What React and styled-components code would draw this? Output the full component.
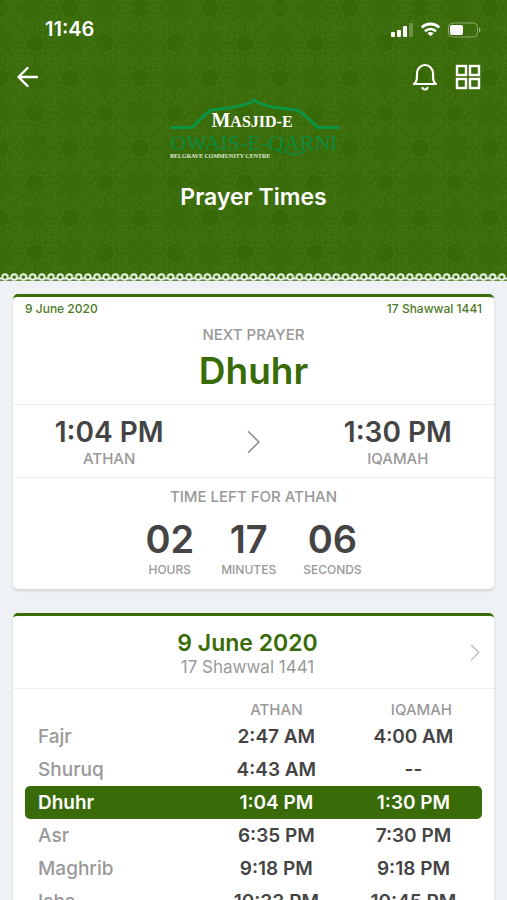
import { Fragment } from "react";
import styled, { createGlobalStyle } from "styled-components";

const prayers = [
  { name: "Fajr", athan: "2:47 AM", iqamah: "4:00 AM" },
  { name: "Shuruq", athan: "4:43 AM", iqamah: "--" },
  { name: "Dhuhr", athan: "1:04 PM", iqamah: "1:30 PM", active: true },
  { name: "Asr", athan: "6:35 PM", iqamah: "7:30 PM" },
  { name: "Maghrib", athan: "9:18 PM", iqamah: "9:18 PM" },
  { name: "Isha", athan: "10:33 PM", iqamah: "10:45 PM" },
];

const countdown = [
  { value: "02", label: "Hours" },
  { value: "17", label: "Minutes" },
  { value: "06", label: "Seconds" },
];

// centres of the two rosettes repeated by the header pattern
const rosettes = [
  [0, 8], [70, 8], [0, 78], [70, 78], [35, 43],
];
const spokes = [0, 45, 90, 135, 180, 225, 270, 315];

function HeaderPattern() {
  return (
    <PatternSvg aria-hidden="true">
      <defs>
        <pattern id="rosettes" width="70" height="70" patternUnits="userSpaceOnUse">
          <g fill="none" stroke="#5b8a35" strokeOpacity="0.22" strokeWidth="1">
            {rosettes.map(([x, y]) => (
              <g key={`${x}-${y}`} transform={`translate(${x} ${y})`}>
                <circle r="9.500" fill="#326304" fillOpacity="0.3" />
                {spokes.map((angle) => (
                  <Fragment key={angle}>
                    <circle r="5" cx="19" transform={`rotate(${angle + 22})`} />
                    <path d="M9.500 0 L20 -8 L29 0 L20 8 Z" transform={`rotate(${angle})`} />
                  </Fragment>
                ))}
              </g>
            ))}
          </g>
        </pattern>
      </defs>
      <rect width="100%" height="100%" fill="url(#rosettes)" />
    </PatternSvg>
  );
}

function Lace() {
  return (
    <LaceSvg aria-hidden="true">
      <defs>
        <pattern id="lace" width="9.2" height="9" patternUnits="userSpaceOnUse">
          <circle cx="5" cy="4" r="2.8" fill="none" stroke="#eef5ea" strokeWidth="1.9" />
          <path d="M0 5.6 H2 M8 5.6 H9.2" stroke="#eef5ea" strokeWidth="2" />
          <path d="M0 8.5 H9.2" stroke="#eef2f5" strokeWidth="1.4" />
        </pattern>
      </defs>
      <rect width="100%" height="9" fill="url(#lace)" />
    </LaceSvg>
  );
}

function Logo() {
  return (
    <LogoSvg viewBox="0 0 172 64" role="img" aria-label="Masjid-e Owais-e-Qarni">
      <path
        d="M2 29.500 H24 C31 23 36 17 43 12 C56 10 72 10 84 4 L86.500 2 L89 4 C100 10 114 10 129 12 C137 17 144 24 150 29.500 H171"
        fill="none"
        stroke="#0b9444"
        strokeWidth="3"
      />
      <text x="84" y="29" textAnchor="middle" fontSize="20" fontWeight="700" fill="#ffffff">
        M<tspan fontSize="16">ASJID-E</tspan>
      </text>
      <text x="86" y="52" textAnchor="middle" fontSize="22" fill="#0b8a3e">
        OWAIS-E-QARNI
      </text>
      <path d="M116 52 C121 57 130 58 137 53" fill="none" stroke="#0b8a3e" strokeWidth="1.400" />
      <text x="2" y="60" fontSize="6" fontWeight="700" fill="#dfe9d6">
        BELGRAVE COMMUNITY CENTRE
      </text>
    </LogoSvg>
  );
}

function StatusIcons() {
  return (
    <svg width="90" height="18" viewBox="0 0 90 18" aria-hidden="true">
      <g fill="#ffffff">
        <rect x="0" y="12" width="4" height="5" rx="1" />
        <rect x="6" y="10" width="4" height="7" rx="1" />
        <rect x="12" y="6" width="4" height="11" rx="1" />
        <rect x="18" y="3" width="4" height="14" rx="1" opacity="0.25" />
        <path d="M39.500 16.300 L36.400 13.300 A4.200 4.200 0 0 1 42.600 13.300 Z" />
        <rect x="59" y="5" width="13" height="10" rx="2" />
        <path d="M88 7.500 C90 8.500 90 11.500 88 12.500 Z" opacity="0.5" />
      </g>
      <g fill="none" stroke="#ffffff">
        <path d="M30.800 7.500 A12.400 12.400 0 0 1 48.200 7.500" strokeWidth="2.900" />
        <path d="M34 11.200 A8 8 0 0 1 45 11.200" strokeWidth="2.700" />
        <rect x="57.500" y="3" width="29" height="14" rx="4" opacity="0.4" />
      </g>
    </svg>
  );
}

function Chevron({ width, height, color }) {
  return (
    <svg width={width} height={height} viewBox="0 0 12 22" fill="none" stroke={color} strokeWidth="1.400" aria-hidden="true">
      <path d="M1 1 L11 11 L1 21" />
    </svg>
  );
}

function App() {
  return (
    <>
      <GlobalStyle />
      <Header>
        <HeaderPattern />
        <StatusBar>
          <Clock>11:46</Clock>
          <StatusIcons />
        </StatusBar>
        <NavBar>
          <IconButton aria-label="Back">
            <svg width="22" height="22" viewBox="0 0 22 22" fill="none" stroke="#ffffff" strokeWidth="2.400" strokeLinecap="round" strokeLinejoin="round">
              <path d="M20 11 H2 M10.500 2 L1.500 11 L10.500 20" />
            </svg>
          </IconButton>
          <NavActions>
            <IconButton aria-label="Notifications">
              <svg width="26" height="28" viewBox="0 0 26 28" fill="none" stroke="#ffffff" strokeWidth="2.200" strokeLinecap="round" strokeLinejoin="round">
                <path d="M2 21 C5 19 5 16 5 10.500 A8 8.500 0 0 1 21 10.500 C21 16 21 19 24 21 Z" />
                <path d="M10.500 25 C11.500 27 14.500 27 15.500 25" />
              </svg>
            </IconButton>
            <IconButton aria-label="Menu">
              <svg width="26" height="26" viewBox="0 0 26 26" fill="none" stroke="#ffffff" strokeWidth="2.400">
                <rect x="2" y="2" width="9" height="9" />
                <rect x="15" y="2" width="9" height="9" />
                <rect x="2" y="15" width="9" height="9" />
                <rect x="15" y="15" width="9" height="9" />
              </svg>
            </IconButton>
          </NavActions>
        </NavBar>
        <Logo />
        <Title>Prayer Times</Title>
        <Lace />
      </Header>

      <Content>
        <Card>
          <NextPrayer>
            <Dates>
              <span>9 June 2020</span>
              <span>17 Shawwal 1441</span>
            </Dates>
            <Label>Next Prayer</Label>
            <PrayerName>Dhuhr</PrayerName>
          </NextPrayer>
          <TimesRow>
            <TimeBlock>
              <Time>1:04 PM</Time>
              <Label>Athan</Label>
            </TimeBlock>
            <Chevron width={13} height={24} color="#8c8c8c" />
            <TimeBlock>
              <Time>1:30 PM</Time>
              <Label>Iqamah</Label>
            </TimeBlock>
          </TimesRow>
          <TimeLeft>
            <Label>Time left for Athan</Label>
            <Countdown>
              {countdown.map(({ value, label }) => (
                <TimeBlock key={label}>
                  <Digits>{value}</Digits>
                  <Label $small>{label}</Label>
                </TimeBlock>
              ))}
            </Countdown>
          </TimeLeft>
        </Card>

        <Card>
          <DayHeader>
            <Day>9 June 2020</Day>
            <HijriDay>17 Shawwal 1441</HijriDay>
            <NextDay aria-label="Next day">
              <Chevron width={10} height={17} color="#b0b0b0" />
            </NextDay>
          </DayHeader>
          <Timetable>
            <thead>
              <tr>
                <td />
                <th scope="col">Athan</th>
                <th scope="col">Iqamah</th>
              </tr>
            </thead>
            <tbody>
              {prayers.map(({ name, athan, iqamah, active }) => (
                <PrayerRow key={name} $active={active}>
                  <th scope="row">{name}</th>
                  <td>{athan}</td>
                  <td>{iqamah}</td>
                </PrayerRow>
              ))}
            </tbody>
          </Timetable>
        </Card>
      </Content>
    </>
  );
}

const GlobalStyle = createGlobalStyle`
  * {
    box-sizing: border-box;
  }
  html {
    height: 100%;
    overflow: hidden;
  }
  body {
    margin: 0;
    height: 100%;
    overflow: hidden;
    background: #eef2f5;
    color: #444444;
    font-family: Inter, "Liberation Sans", sans-serif;
  }
`;
const Header = styled.header`
  position: relative;
  isolation: isolate;
  display: flex;
  flex-direction: column;
  align-items: center;
  background: #3a6b09;
  color: #ffffff;
`;
const PatternSvg = styled.svg`
  position: absolute;
  inset: 0;
  z-index: -1;
  width: 100%;
  height: 100%;
`;
const LaceSvg = styled.svg`
  display: block;
  width: 100%;
  height: 9px;
`;
const StatusBar = styled.div`
  display: flex;
  align-items: center;
  justify-content: space-between;
  width: 100%;
  padding: 18px 26px 0 45px;
`;
const Clock = styled.span`
  font-size: 20px;
  font-weight: 600;
  line-height: 22px;
`;
const NavBar = styled.nav`
  display: flex;
  align-items: center;
  justify-content: space-between;
  width: 100%;
  padding: 22px 26px 0 17px;
`;
const NavActions = styled.div`
  display: flex;
  gap: 17px;
`;
const IconButton = styled.button`
  display: flex;
  align-items: center;
  justify-content: center;
  height: 30px;
  padding: 0;
  border: 0;
  background: none;
  cursor: pointer;
`;
const LogoSvg = styled.svg`
  width: 172px;
  height: 64px;
  margin-top: 6px;
  font-family: "Liberation Serif", serif;
`;
const Title = styled.h1`
  margin: 22px 0 63px;
  font-size: 23px;
  font-weight: 600;
  line-height: 26px;
`;
const Content = styled.main`
  display: flex;
  flex-direction: column;
  gap: 24px;
  padding: 12px 13px;
`;
const Card = styled.section`
  overflow: hidden;
  border-top: 3px solid #3a6b09;
  border-radius: 5px;
  background: #ffffff;
  box-shadow: 0 2px 3px rgba(0, 0, 0, 0.12);
  text-align: center;
`;
const NextPrayer = styled.div`
  padding: 3px 12px 11px;
`;
const Dates = styled.div`
  display: flex;
  justify-content: space-between;
  margin-bottom: 8px;
  color: #4d7a26;
  font-size: 12px;
  font-weight: 500;
  line-height: 18px;
`;
const Label = styled.div`
  color: #999999;
  font-size: ${({ $small }) => ($small ? "12px" : "15px")};
  font-weight: 500;
  line-height: 18px;
  text-transform: uppercase;
`;
const PrayerName = styled.h2`
  margin: 0;
  color: #3a6b09;
  font-size: 37px;
  font-weight: 600;
  line-height: 44px;
  padding-top: 5px;
`;
const TimesRow = styled.div`
  display: grid;
  grid-template-columns: repeat(3, 1fr);
  align-items: center;
  justify-items: center;
  padding: 10px 24px 9px;
  border-top: 1px solid #eeeeee;
  border-bottom: 1px solid #eeeeee;
`;
const TimeBlock = styled.div`
  text-align: center;
`;
const Time = styled.div`
  font-size: 28px;
  font-weight: 600;
  line-height: 35px;
  white-space: nowrap;
`;
const TimeLeft = styled.div`
  padding: 10px 12px;
`;
const Countdown = styled.div`
  display: flex;
  justify-content: center;
  gap: 27px;
  margin-top: 11px;
`;
const Digits = styled.div`
  font-size: 38px;
  font-weight: 600;
  line-height: 44px;
`;
const DayHeader = styled.div`
  position: relative;
  padding: 14px 40px 9px 28px;
  border-bottom: 1px solid #eeeeee;
`;
const Day = styled.h2`
  margin: 0;
  color: #3a6b09;
  font-size: 23px;
  font-weight: 600;
  line-height: 26px;
`;
const HijriDay = styled.div`
  color: #999999;
  font-size: 17px;
  line-height: 23px;
`;
const NextDay = styled.button`
  position: absolute;
  top: 0;
  right: 0;
  bottom: 0;
  display: flex;
  align-items: center;
  padding: 0 14px;
  border: 0;
  background: none;
  cursor: pointer;
`;
const Timetable = styled.table`
  width: calc(100% - 24px);
  margin: 10px 12px;
  border-collapse: separate;
  border-spacing: 0;
  table-layout: fixed;

  thead td {
    width: 40%;
    padding: 0;
  }
  thead th {
    padding: 0;
    color: #999999;
    font-size: 15px;
    font-weight: 500;
    line-height: 21px;
    text-transform: uppercase;
  }
  thead th:last-child {
    padding-left: 16px;
  }
`;
const PrayerRow = styled.tr`
  background: ${({ $active }) => ($active ? "#3a6b09" : "none")};
  color: ${({ $active }) => ($active ? "#ffffff" : "#444444")};
  font-size: 19px;
  line-height: 33px;

  th {
    padding: 0 0 0 13px;
    border-radius: 5px 0 0 5px;
    color: ${({ $active }) => ($active ? "#ffffff" : "#999999")};
    font-weight: ${({ $active }) => ($active ? 600 : 500)};
    text-align: left;
  }
  td {
    padding: 0;
    font-weight: 600;
    white-space: nowrap;
  }
  td:last-child {
    border-radius: 0 5px 5px 0;
  }
`;
export default App;
